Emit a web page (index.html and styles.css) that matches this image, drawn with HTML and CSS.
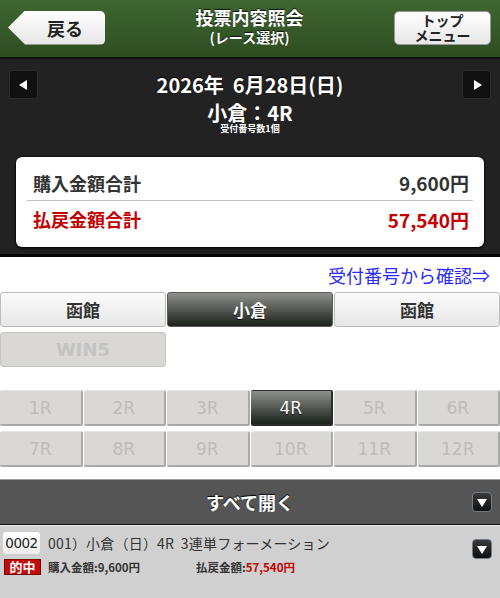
FILE: index.html
```html
<!DOCTYPE html>
<html lang="ja">
<head>
<meta charset="utf-8">
<title>投票内容照会</title>
<link rel="stylesheet" href="styles.css">
</head>
<body>
<header class="hdr">
  <a class="back"><span>戻る</span></a>
  <div class="title">
    <div class="t1">投票内容照会</div>
    <div class="t2">(レース選択)</div>
  </div>
  <a class="topbtn">トップ<br>メニュー</a>
</header>

<section class="dark">
  <div class="daterow">
    <a class="arrow"><span class="tri-l"></span></a>
    <div class="date">2026年&nbsp; 6月28日(日)</div>
    <a class="arrow"><span class="tri-r"></span></a>
  </div>
  <div class="race">小倉：4R</div>
  <div class="cnt">受付番号数1個</div>
  <div class="card">
    <div class="row"><span>購入金額合計</span><span class="amt">9,600円</span></div>
    <div class="row red"><span>払戻金額合計</span><span class="amt">57,540円</span></div>
  </div>
</section>

<div class="linkrow"><a class="link">受付番号から確認⇒</a></div>

<div class="tabs">
  <a class="tab">函館</a>
  <a class="tab on">小倉</a>
  <a class="tab">函館</a>
</div>
<div class="win5row"><a class="win5">WIN5</a></div>

<div class="races">
  <a class="rb">1R</a><a class="rb">2R</a><a class="rb">3R</a><a class="rb on">4R</a><a class="rb">5R</a><a class="rb">6R</a>
  <a class="rb">7R</a><a class="rb">8R</a><a class="rb">9R</a><a class="rb">10R</a><a class="rb">11R</a><a class="rb">12R</a>
</div>

<div class="bar">
  <span class="bartext">すべて開く</span>
  <a class="down"><span class="tri-d"></span></a>
</div>

<div class="item">
  <div class="itemmain">
    <div class="line1"><span class="num">0002</span><span class="desc">001）小倉（日）4R&nbsp; 3連単フォーメーション</span></div>
    <div class="line2"><span class="hit">的中</span><span class="buy">購入金額:9,600円</span><span class="pay">払戻金額:<em>57,540円</em></span></div>
  </div>
  <a class="down dsm"><span class="tri-d"></span></a>
</div>
</body>
</html>
```

FILE: styles.css
```css
* { box-sizing: border-box; }
html, body { margin: 0; padding: 0; }
body {
  width: 500px;
  background: #fff;
  font-family: "Noto Sans CJK JP", "Noto Sans", sans-serif;
  color: #333;
  overflow: hidden;
}
a { text-decoration: none; }

/* header */
.hdr {
  height: 59px;
  display: flex;
  align-items: center;
  justify-content: space-between;
  padding: 0 9px 2px 8px;
  background: linear-gradient(#3f6731, #2e4d22);
  border-bottom: 2px solid #0f0f0f;
}
.back {
  width: 97px;
  height: 34px;
  display: flex;
  align-items: center;
  justify-content: center;
  padding-left: 17px;
  background: linear-gradient(#ffffff, #e6e6e6);
  border-radius: 0 5px 5px 0;
  clip-path: polygon(17px 0, 100% 0, 100% 100%, 17px 100%, 0 50%);
  color: #222;
  font-weight: bold;
  font-size: 18px;
  line-height: 22px;
}
.title {
  text-align: center;
  color: #fff;
  font-weight: bold;
  text-shadow: 0 -1px 1px #111;
  margin-top: -2px;
}
.t1 { font-size: 18px; line-height: 22px; }
.t2 { font-size: 14px; line-height: 19px; }
.topbtn {
  width: 97px;
  height: 34px;
  display: flex;
  align-items: center;
  justify-content: center;
  text-align: center;
  background: linear-gradient(#ffffff, #e6e6e6);
  border-radius: 5px;
  border: 1px solid #9a9a9a;
  color: #222;
  font-weight: bold;
  font-size: 14px;
  line-height: 15px;
}

/* dark section */
.dark {
  background: #222;
  padding: 11px 9px 7px;
  border-bottom: 3px solid #060606;
  color: #fff;
  text-align: center;
}
.daterow {
  display: flex;
  align-items: center;
  justify-content: space-between;
  height: 29px;
}
.arrow {
  width: 29px;
  height: 29px;
  background: #111;
  border: 1px solid #2c2c2c;
  border-radius: 3px;
  display: flex;
  align-items: center;
  justify-content: center;
}
.tri-l, .tri-r {
  width: 0; height: 0;
  border-top: 5px solid transparent;
  border-bottom: 5px solid transparent;
}
.tri-l { border-right: 8px solid #fff; margin-right: 2px; }
.tri-r { border-left: 8px solid #fff; margin-left: 2px; }
.date {
  font-size: 20px;
  font-weight: bold;
  line-height: 24px;
  text-shadow: 0 -1px 1px #000;
}
.race {
  margin-top: 3px;
  font-size: 20px;
  font-weight: bold;
  line-height: 22px;
}
.cnt {
  font-size: 9px;
  font-weight: bold;
  line-height: 10px;
}
.card {
  margin: 23px 7px 0;
  height: 90px;
  background: #fff;
  border-radius: 6px;
  box-shadow: 0 0 2px #000, 0 1px 3px #000;
  padding: 8px 11px 0;
  text-align: left;
  color: #333;
}
.row {
  height: 36px;
  display: flex;
  align-items: center;
  justify-content: space-between;
  padding: 0 4px 0 6px;
  font-weight: bold;
  font-size: 18px;
}
.row:first-child { border-bottom: 1px solid #c4c4c4; }
.row .amt { font-size: 19px; }
.row.red { color: #c20000; }

/* link */
.linkrow {
  height: 35px;
  padding: 7px 10px 0 0;
  text-align: right;
}
.link {
  color: #2b2bf5;
  font-size: 18px;
  line-height: 22px;
}

/* venue tabs */
.tabs {
  display: grid;
  grid-template-columns: repeat(3, 1fr);
  gap: 1px;
}
.tab, .win5 {
  height: 35px;
  display: flex;
  align-items: center;
  justify-content: center;
  border-radius: 3px;
  font-weight: bold;
  font-size: 17px;
}
.tab {
  background: linear-gradient(#fbfbfb, #e7e7e7);
  border: 1px solid #bcbcbc;
  color: #333;
}
.tab.on {
  background: linear-gradient(#8e908c, #1a221a);
  border-color: #5a5a5a;
  color: #fff;
  text-shadow: 0 1px 1px #000;
}
.win5row { margin-top: 5px; }
.win5 {
  width: 166px;
  background: #d9d8d5;
  border: 1px solid #c5c5c3;
  color: #c3c3c3;
  font-family: "DejaVu Sans", sans-serif;
  font-size: 18px;
}

/* race buttons */
.races {
  margin-top: 23px;
  display: grid;
  grid-template-columns: repeat(6, 1fr);
  gap: 5px 1px;
}
.rb {
  height: 36px;
  display: flex;
  align-items: center;
  justify-content: center;
  background: #d9d8d5;
  border-radius: 2px;
  border-right: 2px solid #a9a9a7;
  border-bottom: 2px solid #a9a9a7;
  border-top: 1px solid #e4e4e2;
  color: #bdbdbb;
  font-family: "DejaVu Sans", sans-serif;
  font-size: 17px;
}
.rb.on {
  background: linear-gradient(#8e908c, #1a221a);
  border-color: #2a2a2a;
  color: #fff;
  text-shadow: 0 1px 1px #000;
}

/* bar */
.bar {
  margin-top: 12px;
  height: 46px;
  background: #555;
  border-top: 1px solid #9a9a9a;
  border-bottom: 1px solid #111;
  position: relative;
  display: flex;
  align-items: center;
  justify-content: center;
}
.bartext {
  color: #fff;
  font-weight: bold;
  font-size: 18px;
  text-shadow: 0 -1px 1px #000;
}
.down {
  width: 20px;
  height: 20px;
  background: linear-gradient(#3a3a3a, #0e0e0e);
  border: 1px solid #6e7a86;
  border-radius: 4px;
  display: flex;
  align-items: center;
  justify-content: center;
}
.bar .down {
  position: absolute;
  right: 8px;
  top: 12px;
}
.tri-d {
  width: 0; height: 0;
  border-left: 5px solid transparent;
  border-right: 5px solid transparent;
  border-top: 8px solid #fff;
  margin-top: 1px;
}

/* item */
.item {
  border-top: 1px solid #e8e8e8;
  background: #d0d0d0;
  height: 80px;
  display: flex;
  justify-content: space-between;
  padding: 6px 8px 0 3px;
}
.line1 {
  display: flex;
  align-items: center;
  height: 22px;
}
.num {
  width: 37px;
  height: 22px;
  display: flex;
  align-items: center;
  justify-content: center;
  background: linear-gradient(#ffffff, #ececec);
  border-radius: 3px;
  font-family: "DejaVu Sans", sans-serif;
  font-size: 13.5px;
  letter-spacing: -0.5px;
  color: #222;
}
.desc {
  margin-left: 8px;
  font-size: 14px;
  color: #333;
  letter-spacing: 0.2px;
}
.line2 {
  margin-top: 5px;
  display: flex;
  align-items: center;
  height: 16px;
  font-size: 11.5px;
  font-weight: bold;
  color: #333;
}
.hit {
  width: 37px;
  height: 16px;
  margin-left: 1px;
  background: #c30d0d;
  border: 1px solid #7a0000;
  color: #fff;
  font-size: 13px;
  line-height: 14px;
  text-align: center;
}
.buy { margin-left: 7px; width: 148px; }
.pay em { font-style: normal; color: #c20000; }
.dsm { margin-top: 7px; }
```
